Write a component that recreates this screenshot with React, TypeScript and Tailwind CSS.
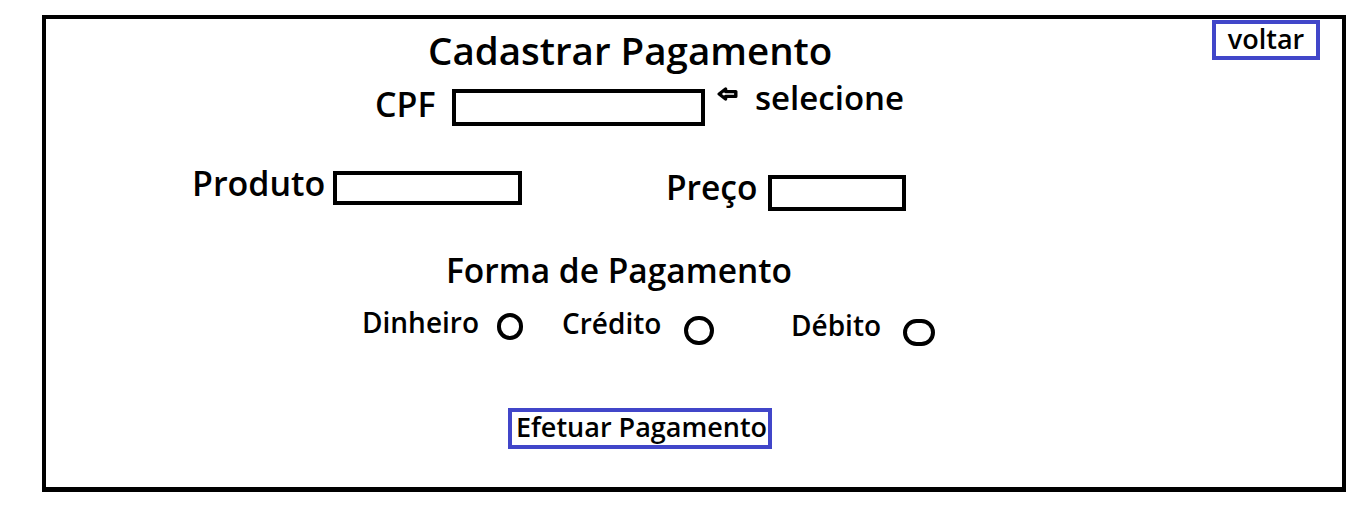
const font = { fontFamily: '"Open Sans", "Noto Sans", Arial, sans-serif' };

function Box({ className }: { className: string }) {
  return <div className={`shrink-0 border-4 border-black bg-white ${className}`} />;
}

function Radio({ className }: { className: string }) {
  return <div className={`shrink-0 rounded-full border-4 border-black ${className}`} />;
}

function ArrowLeft() {
  return (
    <svg width="21" height="14" viewBox="0 0 21 14" className="shrink-0">
      <path
        d="M2.2 7 L8.6 2 L8.6 4.6 L18.8 4.6 L18.8 9.4 L8.6 9.4 L8.6 12 Z"
        fill="white"
        stroke="black"
        strokeWidth="3.4"
        strokeLinejoin="round"
      />
    </svg>
  );
}

export default function App() {
  return (
    <div className="min-h-[511px] w-[1354px] bg-white pl-[42px] pt-[15px] text-black" style={font}>
      <div className="flex h-[477px] w-[1304px] flex-col border-4 border-b-[5px] border-black">
        {/* titulo + voltar */}
        <div className="flex items-start">
          <h1 className="ml-[382px] mt-[12px] text-[38.5px] font-semibold leading-none">Cadastrar Pagamento</h1>
          <button className="ml-auto mr-[22px] mt-[1px] flex h-[40px] w-[108px] justify-center border-4 border-[#4146c9] pt-[1px] text-[27px] font-semibold leading-none">
            voltar
          </button>
        </div>

        {/* CPF */}
        <div className="flex items-start">
          <div className="ml-[329px] mt-[17px] w-[77px] shrink-0 text-[34px] font-semibold leading-none">CPF</div>
          <Box className="mt-[19px] h-[37px] w-[253px]" />
          <div className="ml-[12px] mt-[17px]">
            <ArrowLeft />
          </div>
          <div className="ml-[17px] mt-[11px] text-[33px] font-semibold leading-none">selecione</div>
        </div>

        {/* Produto / Preço */}
        <div className="flex items-start">
          <div className="ml-[146px] mt-[40px] w-[141px] shrink-0 text-[34px] font-semibold leading-none">Produto</div>
          <Box className="mt-[45px] h-[34px] w-[189px]" />
          <div className="ml-[144px] mt-[45px] w-[102px] shrink-0 text-[33.5px] font-semibold leading-none">Preço</div>
          <Box className="mt-[49px] h-[36px] w-[138px]" />
        </div>

        {/* Forma de pagamento */}
        <div className="flex items-start">
          <h2 className="ml-[400px] mt-[43px] text-[33.5px] font-semibold leading-none">Forma de Pagamento</h2>
        </div>

        <div className="flex items-start">
          <div className="ml-[316px] mt-[21px] w-[135px] shrink-0 text-[28px] font-semibold leading-none">Dinheiro</div>
          <Radio className="mt-[26px] h-[27px] w-[26px]" />
          <div className="ml-[39px] mt-[22px] w-[122px] shrink-0 text-[28px] font-semibold leading-none">Crédito</div>
          <Radio className="mt-[29px] h-[29px] w-[30px]" />
          <div className="ml-[77px] mt-[24px] w-[112px] shrink-0 text-[28px] font-semibold leading-none">Débito</div>
          <Radio className="mt-[32px] h-[27px] w-[32px]" />
        </div>

        {/* botão */}
        <div className="flex items-start">
          <button className="ml-[462px] mt-[62px] flex h-[41px] w-[264px] items-start border-4 border-[#4146c9] pl-[4px] pt-[1px] text-[27px] font-semibold leading-none">
            Efetuar Pagamento
          </button>
        </div>
      </div>
    </div>
  );
}
